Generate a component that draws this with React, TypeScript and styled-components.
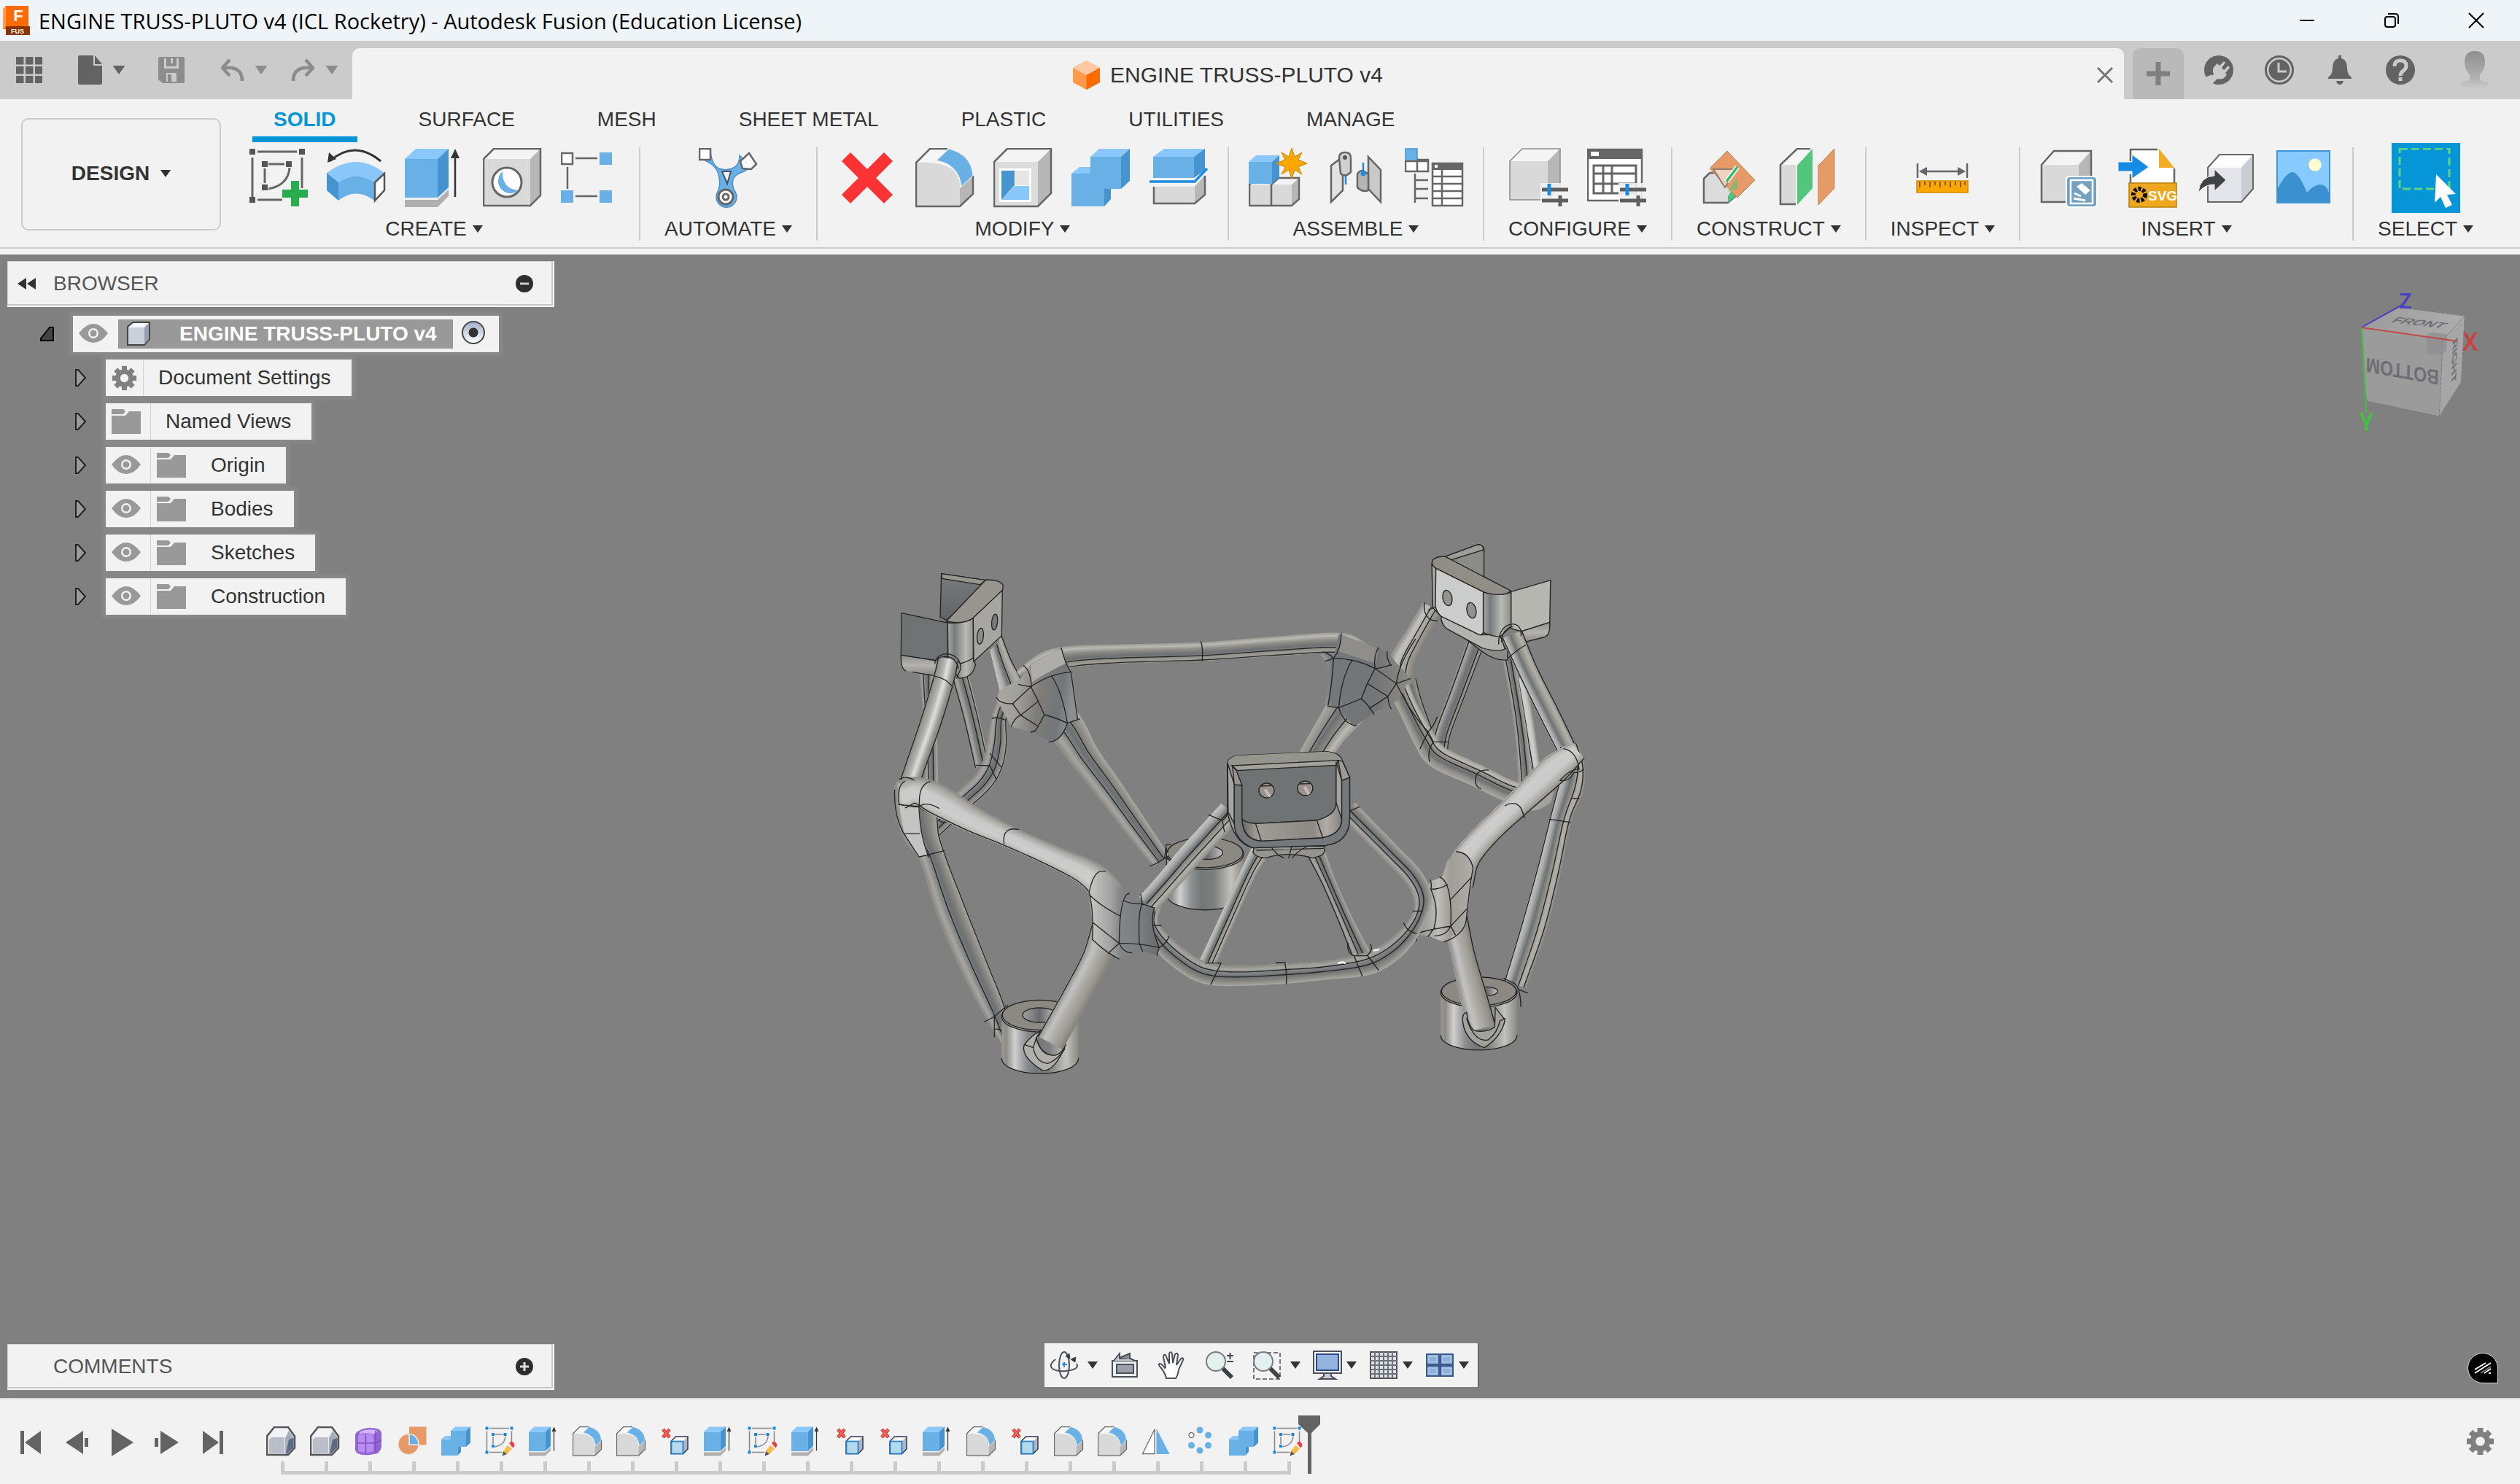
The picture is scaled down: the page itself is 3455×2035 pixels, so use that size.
import React from "react";
import styled, { createGlobalStyle } from "styled-components";

const ui = `"Liberation Sans", Arial, sans-serif`;

const GlobalStyle = createGlobalStyle`
  * { box-sizing: border-box; }
  body { margin: 0; background: #808080; font-family: ${ui}; color: #333; }
  button { font: inherit; color: inherit; background: none; border: 0; padding: 0; margin: 0; cursor: pointer; }
  svg { display: block; }
`;

/* ------------------------------------------------------------------ */
/* Layout parts                                                        */
/* ------------------------------------------------------------------ */

const Page = styled.div`
  min-height: 100vh;
  display: flex;
  flex-direction: column;
`;

const TitleBar = styled.header`
  height: 56px;
  display: flex;
  align-items: center;
  gap: 12px;
  padding: 0 48px 0 4px;
  background: #eef4f7;
  color: #000;
  font: 29px/40px "Open Sans", "Noto Sans", sans-serif;
`;
const WindowTitle = styled.span`
  padding-top: 2px;
`;
const WindowControls = styled.div`
  margin-left: auto;
  display: flex;
  gap: 92px;
`;

const AppBar = styled.div`
  height: 80px;
  display: flex;
  align-items: flex-end;
  background: #cbcbcb;
`;
const QuickAccess = styled.div`
  width: 483px;
  height: 80px;
  flex: none;
  display: flex;
  align-items: center;
  padding-left: 22px;
`;
const QuickButton = styled.button<{ $w: number }>`
  width: ${(p) => p.$w}px;
  display: flex;
  align-items: center;
  gap: 14px;
`;
const DocumentTab = styled.div`
  flex: 1;
  height: 70px;
  display: flex;
  align-items: center;
  justify-content: center;
  background: #f2f2f2;
  border-radius: 10px 10px 0 0;
  font-size: 30px;
  padding: 4px 14px 0 10px;
`;
const DocumentName = styled.div`
  flex: 1;
  display: flex;
  align-items: center;
  justify-content: center;
  gap: 14px;
`;
const AppActions = styled.div`
  width: 543px;
  height: 80px;
  flex: none;
  display: flex;
  align-items: center;
  padding: 0 42px 0 12px;
`;
const NewTab = styled.button`
  align-self: flex-end;
  width: 70px;
  height: 70px;
  display: grid;
  place-items: center;
  background: #b9b9b9;
  border-radius: 10px 10px 0 0;
  margin-right: 28px;
`;
const AppAction = styled.button`
  width: 83px;
  &:last-child { width: 40px; margin-left: auto; }
`;

const Ribbon = styled.section`
  height: 213px;
  display: flex;
  background: #f2f2f2;
  box-shadow: inset 0 -8px #f4f4f4, inset 0 -10px #cccccc;
`;
const WorkspaceButton = styled.button`
  width: 274px;
  height: 154px;
  margin: 26px 11px 0 29px;
  flex: none;
  border: 2px solid #cccccc;
  border-radius: 10px;
  display: flex;
  align-items: center;
  justify-content: center;
  gap: 15px;
  font-size: 28px;
  font-weight: 700;
  padding-bottom: 2px;
`;
const RibbonBody = styled.div`
  flex: 1;
`;
const RibbonTabs = styled.nav`
  height: 59px;
  display: flex;
  gap: 55px;
  padding-left: 32px;
`;
const RibbonTab = styled.button<{ $active?: boolean }>`
  padding: 4px 29px 0;
  height: 59px;
  font-size: 28px;
  line-height: 40px;
  border-bottom: 8px solid ${(p) => (p.$active ? "#0696d7" : "transparent")};
  color: ${(p) => (p.$active ? "#0696d7" : "#333")};
  font-weight: ${(p) => (p.$active ? 700 : 400)};
`;
const ToolGroups = styled.div`
  margin-top: 7px;
  display: flex;
`;
const ToolGroup = styled.div`
  height: 128px;
  padding: 1px 0 0;
  display: flex;
  flex-direction: column;
  align-items: center;
  border-right: 2px solid #cccccc;
  &:last-child { border-right: 0; }
`;
const ToolRow = styled.div`
  display: flex;
  gap: 27px;
  padding: 0 27px;
`;
const ToolButton = styled.button<{ $active?: boolean }>`
  width: 80px;
  height: 82px;
  ${(p) => p.$active && `background: #0696d7; box-shadow: 0 0 0 7px #0696d7;`}
`;
const GroupLabel = styled.button`
  display: flex;
  align-items: center;
  gap: 8px;
  margin-top: 11px;
  padding: 0 33px;
  font-size: 28px;
  line-height: 36px;
`;

const Canvas = styled.main`
  position: relative;
  flex: 1;
  display: flex;
  flex-direction: column;
  justify-content: space-between;
  background: #808080;
`;
const Model = styled.svg`
  position: absolute;
  left: calc(50% - 528px);
  top: 381px;
`;
const TopRow = styled.div`
  display: flex;
  justify-content: space-between;
  align-items: flex-start;
  padding: 9px 0 0 10px;
`;
const ViewCubeSvg = styled.svg`
  margin-top: 12px;
`;
const BrowserPane = styled.section`
  width: 750px;
  position: relative;
  z-index: 1;
`;
const PaneHeader = styled.div`
  width: 750px;
  height: 63px;
  display: flex;
  align-items: center;
  padding: 0 26px 0 13px;
  background: #f2f2f2;
  border: solid #fafafa;
  border-width: 0 2px 2px 0;
  box-shadow: inset -2px -2px #c8c8c8, inset 1px 1px #d4d4d4;
  color: #555;
  font-size: 28px;
`;
const PaneTitle = styled.span<{ $indent?: boolean }>`
  margin-left: ${(p) => (p.$indent ? 50 : 24)}px;
`;
const PaneIcon = styled.button<{ $end?: boolean }>`
  width: 26px;
  height: 26px;
  margin-left: ${(p) => (p.$end ? "auto" : "0")};
`;
const Tree = styled.ul`
  list-style: none;
  margin: 12px 0 0;
  padding: 0;
  display: flex;
  flex-direction: column;
  gap: 10px;
`;
const TreeRow = styled.li<{ $root?: boolean }>`
  height: 50px;
  display: flex;
  align-items: center;
  padding-left: ${(p) => (p.$root ? 43 : 92)}px;
`;
const Twisty = styled.button<{ $root?: boolean }>`
  width: ${(p) => (p.$root ? 47 : 43)}px;
  flex: none;
`;
const TreeItem = styled.div`
  height: 50px;
  display: flex;
  align-items: stretch;
  background: #f2f2f2;
  box-shadow: 0 0 4px 5px rgba(150, 150, 150, 0.4);
`;
const Cell = styled.span<{ $w: number; $line?: boolean }>`
  width: ${(p) => p.$w}px;
  display: flex;
  align-items: center;
  padding-left: 8px;
  border-right: ${(p) => (p.$line ? "1px solid #d4d4d4" : "0")};
`;
const VisibilityButton = styled(Cell).attrs({ as: "button", "aria-label": "Visibility" })`
  padding: 0 0 0 8px;
  border-right: ${(p) => (p.$line ? "1px solid #d4d4d4" : "0")};
`;
const RadioCell = styled.label`
  width: 63px;
  display: flex;
  align-items: center;
  padding-left: 12px;
`;
const ItemName = styled.span<{ $pad: number }>`
  padding: 0 28px 0 ${(p) => p.$pad}px;
  font-size: 28px;
  line-height: 50px;
`;
const RootBar = styled.button`
  height: 40px;
  margin: 5px 0;
  display: flex;
  align-items: center;
  gap: 39px;
  padding: 0 22px 0 11px;
  background: #999999;
  color: #fff;
  font-size: 28px;
  font-weight: 700;
`;
const RadioInput = styled.input`
  appearance: none;
  width: 32px;
  height: 32px;
  margin: 0 0 4px;
  border: 2px solid #444;
  border-radius: 50%;
  background: radial-gradient(circle, #333 0 6px, transparent 7px), linear-gradient(#9fb0cc, #ffffff);
`;

const BottomRow = styled.div`
  display: grid;
  grid-template-columns: 1fr auto 1fr;
  align-items: end;
  padding: 0 30px 11px 10px;
  position: relative;
  z-index: 1;
`;
const NavBar = styled.nav`
  height: 60px;
  margin-bottom: 4px;
  margin-left: 24px;
  display: flex;
  align-items: center;
  padding-left: 7px;
  background: #f2f2f2;
  border-right: 1px solid #444;
`;
const NavButton = styled.button<{ $caret?: boolean; $tight?: boolean }>`
  display: flex;
  align-items: center;
  gap: ${(p) => (p.$tight ? 6 : 12)}px;
  margin-right: ${(p) => (p.$caret ? 17 : 25)}px;
  &:last-child { margin-right: 12px; }
`;
const HelpBadge = styled.button`
  justify-self: end;
  width: 42px;
  height: 42px;
  margin-bottom: 9px;
  background: #000;
  border: 1px solid #ddd;
  border-radius: 21px 21px 0 21px;
  display: grid;
  place-items: center;
`;

const TimelineBar = styled.footer`
  height: 118px;
  display: flex;
  align-items: flex-start;
  background: #f2f2f2;
  border-top: 2px solid #dadada;
  padding-right: 35px;
`;
const Playback = styled.div`
  display: flex;
  width: 355px;
  flex: none;
  padding: 39px 0 0 20px;
  gap: 19px;
`;
const PlayButton = styled.button`
  width: 43px;
  height: 40px;
  display: grid;
  place-items: center;
`;
const Track = styled.ol`
  list-style: none;
  margin: 0;
  padding: 36px 0 0;
  display: flex;
`;
const Feature = styled.li`
  width: 60px;
  display: flex;
  flex-direction: column;
  align-items: center;
`;
const FeatureButton = styled.button`
  width: 41px;
  height: 42px;
`;
const Tick = styled.span<{ $edge?: "first" | "last" }>`
  align-self: stretch;
  height: 18px;
  margin-top: 7px;
  background:
    linear-gradient(#cbcbcb, #cbcbcb) 30px 0 / 5px 18px no-repeat,
    linear-gradient(#cbcbcb, #cbcbcb) ${(p) => (p.$edge === "first" ? "30px" : "0")} 13px /
      ${(p) => (p.$edge === "last" ? "33px" : "60px")} 5px no-repeat;
`;
const Marker = styled.svg`
  margin: 22px 0 0 -15px;
`;
const SettingsButton = styled.button`
  margin: 38px 0 0 auto;
`;

/* ------------------------------------------------------------------ */
/* Small glyphs                                                        */
/* ------------------------------------------------------------------ */

const Caret = ({ c = "#333", w = 14, h = 10 }: { c?: string; w?: number; h?: number }) => (
  <svg width={w} height={h} viewBox="0 0 14 10">
    <path d="M0 0h14l-7 10z" fill={c} />
  </svg>
);

const Gear = ({ size, c, hole }: { size: number; c: string; hole: string }) => (
  <svg width={size} height={size} viewBox="-20 -20 40 40">
    {[0, 45, 90, 135].map((a) => (
      <rect key={a} x="-4" y="-19" width="8" height="38" fill={c} transform={`rotate(${a})`} />
    ))}
    <circle r="14" fill={c} />
    <circle r="6.5" fill={hole} />
  </svg>
);

const Eye = () => (
  <svg width="40" height="28" viewBox="0 0 40 28">
    <path d="M0 13Q10 0 20 0t20 13Q31 26 20 26T0 13z" fill="#999" />
    <circle cx="20" cy="13" r="7" fill="#f2f2f2" />
    <circle cx="20" cy="13" r="4.5" fill="#999" />
  </svg>
);

const Folder = () => (
  <svg width="40" height="34" viewBox="0 0 40 34">
    <path d="M0 0h16l3 3-3 4H0z" fill="#999" />
    <path d="M0 9h19l5-6h16v31H0z" fill="#999" />
  </svg>
);

const Twist = ({ open }: { open?: boolean }) =>
  open ? (
    <svg width="22" height="22" viewBox="0 0 22 22">
      <path d="M20 2v18H3v-3L15 2z" fill="#444" stroke="#000" strokeWidth="2" />
    </svg>
  ) : (
    <svg width="18" height="26" viewBox="0 0 18 26">
      <path d="M2 2h3l10 11L5 24H2z" fill="#9a9a9a" stroke="#222" strokeWidth="2" />
    </svg>
  );

const GridGlyph = () => (
  <svg width="36" height="36" viewBox="0 0 36 36" fill="#636363">
    {[0, 13, 26].map((y) => [0, 13, 26].map((x) => <rect key={`${x}${y}`} x={x} y={y} width="10.5" height="10.5" rx="1" />))}
  </svg>
);
const FileGlyph = () => (
  <svg width="33" height="40" viewBox="0 0 33 40" fill="#636363">
    <path d="M2 0h19v14h12v24q0 2-2 2H2q-2 0-2-2V2q0-2 2-2z" />
    <path d="M23 0v12h10z" />
  </svg>
);
const SaveGlyph = () => (
  <svg width="36" height="36" viewBox="0 0 36 36">
    <path d="M2 0h32q2 0 2 2v32q0 2-2 2H6l-6-5V2q0-2 2-2z" fill="#8c8c8c" />
    <path d="M8 2v14h20V2M11 34V22h14v12" fill="#cbcbcb" />
    <path d="M11 2h14v11H11zM13 24h5v10h-5z" fill="#8c8c8c" />
    <path d="M17 2h3v7h-3z" fill="#cbcbcb" />
  </svg>
);
const UndoGlyph = ({ flip }: { flip?: boolean }) => (
  <svg width="33" height="32" viewBox="0 0 33 32">
    <g transform={flip ? "translate(33 0) scale(-1 1)" : undefined} fill="none" stroke="#8c8c8c" strokeWidth="4.5">
      <path d="M13 2L3 13l10 11" strokeLinejoin="round" />
      <path d="M3 13h12q15 2 15 18" />
    </g>
  </svg>
);

const PlugGlyph = () => (
  <svg width="40" height="40" viewBox="0 0 40 40">
    <circle cx="20" cy="20" r="20" fill="#636363" />
    <path d="M6 34l7-8q-3-8 2-12l3-3 3 3 6-6 2 2-5 7 3 3 6-6 2 3-6 7 2 2q-3 8-13 6l-8 8z" fill="#cbcbcb" />
    <path d="M0 30l12-4-5 9z" fill="#cbcbcb" />
  </svg>
);
const ClockGlyph = () => (
  <svg width="40" height="40" viewBox="0 0 40 40">
    <circle cx="20" cy="20" r="18.5" fill="none" stroke="#636363" strokeWidth="3" />
    <circle cx="20" cy="20" r="14.5" fill="#636363" />
    <path d="M19 10v12h11" fill="none" stroke="#cbcbcb" strokeWidth="3" />
  </svg>
);
const BellGlyph = () => (
  <svg width="40" height="40" viewBox="0 0 40 40" fill="#636363">
    <path d="M18 0h4v4q8 2 8 13 0 9 6 13v2H4v-2q6-4 6-13Q10 6 18 4zM15 35h10q-1 5-5 5t-5-5z" />
  </svg>
);
const HelpGlyph = () => (
  <svg width="40" height="40" viewBox="0 0 40 40">
    <circle cx="20" cy="20" r="20" fill="#636363" />
    <path d="M12 15q0-8 8-8t8 7q0 4-4 7t-4 7" fill="none" stroke="#cbcbcb" strokeWidth="5" />
    <rect x="17.5" y="30" width="5" height="5" fill="#cbcbcb" />
  </svg>
);
const AvatarGlyph = () => (
  <svg width="40" height="52" viewBox="0 0 40 52">
    <defs>
      <linearGradient id="av" x1="0" y1="0" x2="0" y2="1">
        <stop offset="0" stopColor="#8f8f8f" />
        <stop offset=".7" stopColor="#b0b0b0" />
        <stop offset="1" stopColor="#cbcbcb" />
      </linearGradient>
    </defs>
    <path d="M20 0q14 0 14 15 0 11-7 17v7q3 3 11 4 3 8-18 9Q-1 51 1 43q9-1 12-4v-7Q6 26 6 15 6 0 20 0z" fill="url(#av)" />
  </svg>
);

/* ------------------------------------------------------------------ */
/* Ribbon icons, all on an 80 unit grid                                */
/* ------------------------------------------------------------------ */

const K = "#666";
const B1 = "#8ac8fb";
const B2 = "#68b0e6";
const B3 = "#4694cf";

const Box = ({ x = 0, y = 0, w = 65, h = 65, dx = 15, dy = 14, f = ["#d9d9d9", "#f4f4f4", "#b7b7b7"], s = K, sw = 2.5 }: any) => (
  <g>
    <path d={`M${x} ${y + dy}h${w}v${h}h${-w}z`} fill={f[0]} />
    <path d={`M${x} ${y + dy}l${dx} ${-dy}h${w}l${-dx} ${dy}z`} fill={f[1]} />
    <path d={`M${x + w} ${y + dy}l${dx} ${-dy}v${h}l${-dx} ${dy}z`} fill={f[2]} />
    <path d={`M${x} ${y + dy}l${dx} ${-dy}h${w}v${h}l${-dx} ${dy}h${-w}z`} fill="none" stroke={s} strokeWidth={sw} />
  </g>
);
const blue = [B2, B1, B3];

const sketchLines = (node: string, line: string) => (
  <>
    <path d="M12 5h54M5 13v54M73 13v42M12 71h34M27 22h22M22 28v20" stroke={line} strokeWidth="3" fill="none" />
    <path d="M56 27q-2 24-29 29" stroke={line} strokeWidth="3" fill="none" />
    {[[1, 1], [69, 1], [1, 67], [18, 18], [51, 18], [18, 50]].map(([x, y]) => (
      <rect key={`${x}-${y}`} x={x} y={y} width="8" height="8" fill={node} />
    ))}
  </>
);

const Sliders = () => (
  <>
    <path d="M43 48h40v34H43z" fill="#f2f2f2" opacity=".9" />
    <path d="M45 57h36M45 72h36" stroke="#5f5f5f" strokeWidth="5" />
    <path d="M55 49v16" stroke="#1b8ce3" strokeWidth="5" />
    <path d="M70 65v15" stroke="#5f5f5f" strokeWidth="5" />
  </>
);

const icons: Record<string, React.ReactNode> = {
  sketch: (
    <>
      {sketchLines("#555", K)}
      <path d="M58 45h11v12h12v11H69v12H58V68H46V57h12z" fill="#27ad4e" />
    </>
  ),
  sketchEdit: (
    <>
      {sketchLines("#1a86dd", "#888")}
      <path d="M62 52l12 9-14 15-10-8z" fill="#f7bb47" />
      <path d="M50 68l10 8-13 5z" fill="#555" />
      <path d="M66 46q6-8 12-1 6 6-1 14z" fill="#f23b45" />
    </>
  ),
  revolve: (
    <>
      <path d="M4 18Q38-12 74 18" fill="none" stroke="#333" strokeWidth="3" />
      <path d="M1 20L3 6l10 9z" fill="#333" />
      <path d="M0 34Q40 4 79 34L65 47Q40 30 16 47z" fill={B1} />
      <path d="M16 47Q40 30 65 47v25Q40 53 16 72z" fill={B2} />
      <path d="M0 34l16 13v25L0 58z" fill={B3} />
      <path d="M79 35L66 47v25l13-14z" fill="#fff" stroke="#555" strokeWidth="2.5" />
    </>
  ),
  extrude: (
    <>
      <path d="M0 71h45l15-14v9L45 81H0z" fill="#b0b0b0" />
      <Box x={0} y={1} w={45} h={53} f={blue} s="none" />
      <path d="M69 10v57" stroke="#333" strokeWidth="2.5" />
      <path d="M69 1l6 13H63z" fill="#333" />
    </>
  ),
  hole: (
    <>
      <Box x={1} y={1} w={64} h={64} dx={14} />
      <circle cx="33" cy="47" r="20" fill="#fff" stroke={K} strokeWidth="3" />
      <path d="M27 32q-1 24 22 26A17 17 0 1 1 27 32z" fill={B2} />
    </>
  ),
  pattern: (
    <>
      <path d="M20 14h30M9 26v30M20 66h30" stroke={K} strokeWidth="2.5" />
      <rect x="1" y="7" width="15" height="15" fill="#fff" stroke={K} strokeWidth="2.5" />
      <path d="M53 6h17v17H53zM0 58h17v17H0zM53 58h17v17H53z" fill={B2} />
    </>
  ),
  automate: (
    <>
      <path
        d="M16 4q2 20 12 24 10 4 20-1 8-4 8-17l14 14q-2 6-10 9-10 3-13 10-2 10 3 17a14 14 0 1 1-24 0q4-9 2-20-2-12-12-19-8-4-13-8z"
        fill={B2}
        stroke="#4c8fc9"
        strokeWidth="1.5"
      />
      <path d="M32 32h12l-5 17z" fill="#f2f2f2" stroke="#456" strokeWidth="2" />
      <rect x="1" y="1" width="15" height="15" fill="#fff" stroke={K} strokeWidth="2.5" />
      <path d="M69 7l10 15-7 7-12-1-3-10z" fill="#fff" stroke={K} strokeWidth="2.5" />
      <circle cx="37" cy="67" r="10" fill="#fff" stroke={K} strokeWidth="3" />
      <circle cx="37" cy="67" r="4" fill="#fff" stroke={K} strokeWidth="3" />
    </>
  ),
  remove: <path d="M12 12L70 70M70 12L12 70" stroke="#fb3334" strokeWidth="17" />,
  fillet: (
    <>
      <path d="M1 20L20 1h24L28 18q32 6 34 35v27H1z" fill="#f6f6f6" />
      <path d="M1 20q60-4 60 33v27H1z" fill="#d9d9d9" />
      <path d="M61 55l18-16v24L61 80z" fill="#b7b7b7" />
      <path d="M44 1L20 1 1 20v60h60l18-17V38" fill="none" stroke={K} strokeWidth="2.5" />
      <path d="M46 1q31 8 33 37L63 53Q60 23 29 17z" fill={B2} stroke="#f2f2f2" strokeWidth="1" />
    </>
  ),
  shell: (
    <>
      <Box x={1} y={1} w={60} h={61} dx={18} dy={18} f={["#dcdcdc", "#f4f4f4", "#b7b7b7"]} />
      <path d="M8 28h44v46H8z" fill="#fff" />
      <path d="M11 31v40l18-20V31z" fill={B3} />
      <path d="M11 71l18-19h20v19z" fill={B1} />
      <path d="M30 31h19v20H30z" fill="#e6e6e6" />
    </>
  ),
  combine: (
    <>
      <path d="M0 35h26V12h42v44H45v24H0z" fill={B2} />
      <path d="M0 35l11-9h15v9zM26 12L38 1h42L68 12z" fill={B1} />
      <path d="M68 12L80 1v44L68 56zM45 56h9v14l-9 10z" fill={B3} />
    </>
  ),
  split: (
    <>
      <Box x={5} y={1} w={56} h={29} dx={15} dy={11} f={blue} s="none" />
      <path d="M5 53h57l15-16v28L62 77H5z" fill="#d9d9d9" />
      <path d="M62 53l14-16v28L62 77z" fill="#b7b7b7" />
      <path d="M6 53v23h56l14-12V38" fill="none" stroke={K} strokeWidth="2.5" />
      <path d="M0 46h62l17-18" fill="none" stroke="#1b8ce3" strokeWidth="3.5" />
    </>
  ),
  component: (
    <>
      <Box x={1} y={41} w={30} h={29} dx={10} dy={9} />
      <Box x={31} y={41} w={28} h={29} dx={10} dy={9} />
      <Box x={0} y={10} w={32} h={30} dx={10} dy={9} f={blue} s="none" />
      <path d="M59 0l4 12 10-6-5 10 12 5-12 5 5 10-10-6-4 12-4-12-10 6 5-10-12-5 12-5-5-10 10 6z" fill="#fba700" stroke="#c98600" strokeWidth="1" />
    </>
  ),
  joint: (
    <>
      <g stroke={K} strokeWidth="2.5">
        <path d="M6 24l16-12v46L6 74z" fill="#e2e2e2" />
        <path d="M17 13q0-7 8-7t8 7v20q-8 8-14 2z" fill="#d0d0d0" />
        <path d="M57 12l17 18v44L57 56z" fill="#c9c9c9" />
        <path d="M42 36q2-5 8-5l7 5v22q-8 3-15-4z" fill="#b5b5b5" />
      </g>
      <circle cx="25" cy="13" r="3" fill="#555" />
      <path d="M26 38v12M50 20v15" stroke="#1b8ce3" strokeWidth="2.5" />
      <circle cx="50" cy="35" r="3.5" fill="#1b8ce3" />
    </>
  ),
  bom: (
    <>
      <rect width="17" height="17" y="1" fill={B2} stroke={B3} strokeWidth="1.5" />
      <path d="M1 18h31v14H1zM17 16v16M17 16h15v8" fill="#fff" stroke={K} strokeWidth="2.5" />
      <path d="M14 35v40M14 44h18M14 56h18M14 69h18" stroke={K} strokeWidth="2.5" fill="none" />
      <rect x="38" y="21" width="41" height="58" fill="#fff" stroke={K} strokeWidth="2.5" />
      <path d="M37 20h43v10H37z" fill={K} />
      <path d="M38 39h41M38 49h41M38 59h41M38 69h41M51 30v49" stroke={K} strokeWidth="2.5" />
      <path d="M41 23h4v4h-4z" fill="#fff" />
    </>
  ),
  config: (
    <>
      <Box x={1} y={1} w={52} h={53} dx={17} dy={17} s="#8a8a8a" sw={1.5} />
      <Sliders />
    </>
  ),
  configTable: (
    <>
      <rect x="1" y="2" width="74" height="70" fill="#fff" stroke={K} strokeWidth="2.5" />
      <path d="M0 1h76v14H0z" fill={K} />
      <path d="M5 5h11v6H5z" fill="#fff" />
      <path d="M9 24h58v38H9zM9 35h58M9 49h58M22 24v38M34 24v38" fill="none" stroke={K} strokeWidth="3" />
      <Sliders />
    </>
  ),
  offsetPlane: (
    <>
      <path d="M5 42l8-8h40v28L38 75H5z" fill="#dcdcdc" stroke={K} strokeWidth="2.5" />
      <path d="M38 66l18-26v20L38 75z" fill="#4ec47d" />
      <path d="M37 4l38 40-24 24L13 28z" fill="#e59a67" stroke="#c98152" strokeWidth="1" />
      <path d="M18 29h32L34 54z" fill="#eed2be" stroke="#8b7b70" strokeWidth="2" />
      <path d="M36 46l15-20" stroke="#fff" strokeWidth="7" />
      <path d="M51 40v16L38 60z" fill="#8cb574" />
      <path d="M36 46l15-20" stroke="#2fb963" strokeWidth="3.5" />
    </>
  ),
  midPlane: (
    <>
      <path d="M3 23L26 1h18L24 24v53H3z" fill="#f6f6f6" />
      <path d="M3 23h21v54H3z" fill="#d9d9d9" />
      <path d="M44 1H26L3 23v54h21" fill="none" stroke={K} strokeWidth="2.5" />
      <path d="M26 24L47 1v54L26 78z" fill="#54c57c" />
      <path d="M55 24L77 1v54L55 78z" fill="#e59a67" stroke="#c98152" strokeWidth="1" />
    </>
  ),
  measure: (
    <>
      <path d="M6 21v20M74 21v20M12 32h56" stroke={K} strokeWidth="2.5" />
      <path d="M8 32l11-6v12zM72 32l-11-6v12z" fill={K} />
      <rect x="5" y="45" width="70" height="16" fill="#fba700" stroke="#d48a00" strokeWidth="1.5" />
      <path d="M9 46v8M16 46v5M23 46v8M30 46v5M37 46v8M44 46v5M51 46v8M58 46v5M65 46v8M71 46v5" stroke="#8a5c00" strokeWidth="2" />
    </>
  ),
  derive: (
    <>
      <Box x={2} y={4} w={51} h={51} dx={17} dy={19} />
      <rect x="35" y="38" width="44" height="44" rx="5" fill="#fff" />
      <rect x="37" y="40" width="40" height="40" rx="4" fill="#73a1c0" />
      <rect x="42" y="44" width="30" height="32" fill="none" stroke="#fff" strokeWidth="2.5" />
      <path d="M50 53l7-5 12 10-7 6z" fill="#fff" />
      <path d="M47 62l9 4M46 69l16 3" stroke="#fff" strokeWidth="3" />
    </>
  ),
  svgIn: (
    <>
      <path d="M17 2h38l22 26v20H17z" fill="#fff" />
      <path d="M17 18V2h37M77 28v20M17 36v12" fill="none" stroke={K} strokeWidth="2.5" />
      <path d="M56 1l21 26H56z" fill="#f0ac22" />
      <path d="M0 19h19V9l23 17-23 16V32H0z" fill="#158be6" stroke="#f2f2f2" strokeWidth="1" />
      <rect x="15" y="48" width="65" height="33" fill="#eda81f" stroke="#b87f10" strokeWidth="1.5" />
      <circle cx="29" cy="64" r="8" fill="none" stroke="#111" strokeWidth="6" strokeDasharray="4 2" />
      <text x="41" y="72" fontFamily="Liberation Sans, sans-serif" fontWeight="700" fontSize="19" fill="#fff">SVG</text>
    </>
  ),
  insertMesh: (
    <>
      <Box x={16} y={9} w={46} h={47} dx={16} dy={18} f={["#e3e5ea", "#fdfdfd", "#c9ccd2"]} sw={2} />
      <path d="M3 61q2-22 22-23v-9l16 15-16 15v-9Q11 50 3 61z" fill="#3f4246" stroke="#f2f2f2" strokeWidth="1" />
    </>
  ),
  canvasPic: (
    <>
      <rect x="4" y="4" width="72" height="71" fill="#87caff" stroke="#3f93d6" strokeWidth="2" />
      <circle cx="56" cy="23" r="9" fill="#fdfdd0" stroke="#a9d5ee" strokeWidth="1" />
      <path d="M5 55q12-22 20-22t20 28q10-11 18-11t12 11v13H5z" fill="#3b91cf" />
    </>
  ),
  select: (
    <>
      <path d="M4 1h68v55H4z" fill="none" stroke="#5fd384" strokeWidth="3" strokeDasharray="11 5" />
      <path d="M54 36l27 27-12 1 7 14-9 4-7-15-8 8z" fill="#fff" />
    </>
  ),
  solidBody: (
    <>
      <path d="M2 27L22 2h38l18 25v32L60 78H2z" fill="#e8eaee" stroke="#555" strokeWidth="5" />
      <path d="M8 38q3-8 10-8h32v44H8z" fill="#b9bec9" />
      <path d="M52 32L62 12l13 18v26L58 75h-6z" fill="#a6adbd" />
      <path d="M62 36l13-4v26L58 75h-4z" fill="#5c6a82" />
      <path d="M10 27L25 6h32l4 5-9 19z" fill="#f2f3f5" />
    </>
  ),
  form: (
    <>
      <path d="M14 12q20-12 48-6 16 2 14 20v30q-4 20-22 20-26 6-44-2-8-6-6-20V26q0-10 10-14z" fill="#9466d3" />
      <path d="M12 24q22-8 42 0v44q-22 8-42 0z" fill="#b98cf0" />
      <path d="M18 14q22-10 48-2L54 22q-20-6-40-1z" fill="#d3b4fa" />
      <path d="M33 22v50M10 46h46q14-4 20-10M60 12v58" fill="none" stroke="#7e4fc2" strokeWidth="3" />
    </>
  ),
  plane: (
    <>
      <path d="M32 1h47v50H32z" fill="#e59a67" />
      <circle cx="30" cy="49" r="28" fill="#e59a67" stroke="#f2f2f2" strokeWidth="1.5" />
      <path d="M32 21q24 2 26 29H32z" fill={B2} stroke="#fff" strokeWidth="2.5" />
    </>
  ),
  removeBody: (
    <>
      <path d="M8 8l18 22M26 8L8 30" stroke="#c9302c" strokeWidth="9" />
      <path d="M8 8l18 22M26 8L8 30" stroke="#f2665f" strokeWidth="5" />
      <Box x={30} y={28} w={33} h={34} dx={13} dy={13} f={["#a8d4ea", "#fdfdfd", "#aeb6c4"]} s="#2b3850" sw={3} />
      <rect x="31" y="41" width="32" height="34" fill="#b3daec" stroke="#2a7fc8" strokeWidth="3.5" />
    </>
  ),
  mirror: (
    <>
      <path d="M36 8v67H3z" fill="#fff" stroke={K} strokeWidth="2.5" />
      <path d="M41 6v70h36z" fill={B2} />
    </>
  ),
  circular: (
    <>
      <circle cx="17" cy="24" r="7" fill="#fff" stroke={K} strokeWidth="2.5" />
      {[[40, 10], [63, 24], [63, 52], [40, 66], [17, 52]].map(([x, y]) => (
        <circle key={`${x}${y}`} cx={x} cy={y} r="9" fill={B2} />
      ))}
    </>
  ),
};

const Icon = ({ name, size = 82 }: { name: string; size?: number }) => (
  <svg width={size} height={size} viewBox="0 0 82 82">
    {icons[name]}
  </svg>
);

/* ------------------------------------------------------------------ */
/* Navigation bar icons on a 40 unit grid                              */
/* ------------------------------------------------------------------ */

const N = "#4b4f58";
const nav: { name: string; caret?: boolean; tight?: boolean; art: React.ReactNode }[] = [
  {
    name: "Orbit",
    caret: true,
    art: (
      <g fill="none" stroke={N} strokeWidth="2">
        <ellipse cx="20" cy="20" rx="7" ry="18" />
        <path d="M8 12q-10 8-4 13 6 4 18 3 20-2 15-10" />
        <path d="M22 8l6 3-1-7zM29 12l6 4 1-7z" fill="#333" strokeWidth="1" />
        <path d="M20 16v7M17 19h7" stroke="#1b8ce3" />
      </g>
    ),
  },
  {
    name: "Look at",
    art: (
      <g stroke={N} strokeWidth="2">
        <path d="M3 14h34v22H3z" fill="#eceef1" />
        <path d="M5 14l8-10v7h15l6 3" fill="#c9ccd1" />
        <path d="M13 10l14-6v8" fill="#8b9097" />
        <rect x="9" y="19" width="23" height="12" fill="#9ba1ab" />
      </g>
    ),
  },
  {
    name: "Pan",
    art: (
      <path
        d="M12 38q-2-8-7-14-5-5-2-6 3 0 7 6l1-1L8 9q0-4 3-3l5 12 0-14q2-4 4 0l1 13 3-12q3-3 4 1l-2 14 6-9q4-2 3 2l-6 13q-1 8-4 12z"
        fill="#fff"
        stroke={N}
        strokeWidth="2"
      />
    ),
  },
  {
    name: "Zoom",
    art: (
      <g>
        <path d="M24 24l13 13" stroke="#3b3f47" strokeWidth="6" />
        <circle cx="15" cy="15" r="13" fill="#e2f1ee" stroke="#777c85" strokeWidth="2" />
        <path d="M30 7h9M34.500 3v9M30 15h9" stroke="#444" strokeWidth="2" />
      </g>
    ),
  },
  {
    name: "Zoom window",
    caret: true,
    art: (
      <g>
        <rect x="2" y="3" width="36" height="36" fill="none" stroke="#777" strokeWidth="2" strokeDasharray="6 3" />
        <path d="M24 24l13 13" stroke="#444" strokeWidth="6" />
        <circle cx="15" cy="15" r="13" fill="#e2f1ee" stroke="#777c85" strokeWidth="2" />
      </g>
    ),
  },
  {
    name: "Display settings",
    caret: true,
    tight: true,
    art: (
      <g>
        <path d="M15 31h10v4l6 4H9l6-4z" fill="#c8ccd4" stroke={N} strokeWidth="2" />
        <rect x="1" y="1" width="38" height="30" fill="#f4f5f7" stroke={N} strokeWidth="2" />
        <rect x="5" y="5" width="30" height="22" fill="#93b4df" stroke="#2f4a80" strokeWidth="2" />
      </g>
    ),
  },
  {
    name: "Grid and snaps",
    caret: true,
    tight: true,
    art: (
      <g>
        <rect x="2" y="2" width="36" height="36" fill="#dfe1e6" stroke="#555" strokeWidth="2" />
        <path d="M8 2v36M14 2v36M20 2v36M26 2v36M32 2v36M2 8h36M2 14h36M2 20h36M2 26h36M2 32h36" stroke="#6d717a" strokeWidth="2" />
      </g>
    ),
  },
  {
    name: "Viewports",
    caret: true,
    tight: true,
    art: (
      <g fill="#8fb0da" stroke="#3a5a8c" strokeWidth="2">
        <path d="M2 5h17v14H2zM21 5h17v14H21zM2 21h17v14H2zM21 21h17v14H21z" />
        <path d="M5 8h11v8H5zM24 8h11v8H24zM5 24h11v8H5zM24 24h11v8H24z" stroke="#b9d0ec" strokeWidth="1" fill="none" />
      </g>
    ),
  },
];

/* ------------------------------------------------------------------ */
/* Truss model                                                         */
/* ------------------------------------------------------------------ */

type P = [number, number, number];
type Stop = [number, string];

const hex = (c: string) => [1, 3, 5].map((i) => parseInt(c.slice(i, i + 2), 16));
const shadeAt = (stops: Stop[], t: number) => {
  let i = 0;
  while (i < stops.length - 2 && t > stops[i + 1][0]) i++;
  const [a, ca] = stops[i];
  const [b, cb] = stops[i + 1];
  const k = Math.min(1, Math.max(0, (t - a) / (b - a)));
  const x = hex(ca);
  const y = hex(cb);
  return `rgb(${x.map((v, j) => Math.round(v + (y[j] - v) * k)).join(",")})`;
};

/* Catmull-Rom sampling of the centre line, with the width carried along. */
const sample = (pts: P[]) => {
  const out: P[] = [];
  const at = (i: number) => pts[Math.max(0, Math.min(pts.length - 1, i))];
  for (let i = 0; i < pts.length - 1; i++) {
    for (let s = 0; s < 10; s++) {
      const t = s / 10;
      const [a, b, c, d] = [at(i - 1), at(i), at(i + 1), at(i + 2)];
      out.push(
        [0, 1, 2].map(
          (k) =>
            0.5 * (2 * b[k] + (c[k] - a[k]) * t + (2 * a[k] - 5 * b[k] + 4 * c[k] - d[k]) * t * t + (3 * b[k] - a[k] - 3 * c[k] + d[k]) * t * t * t)
        ) as P
      );
    }
  }
  out.push(pts[pts.length - 1]);
  return out;
};

const SH: Record<string, Stop[]> = {
  ring: [[0, "#9b9992"], [0.15, "#bab9b4"], [0.35, "#8f8d87"], [0.6, "#6c7071"], [0.75, "#8d8c88"], [1, "#aba9a3"]],
  bright: [[0, "#8b8983"], [0.15, "#a9a8a3"], [0.4, "#c8c9c8"], [0.75, "#cccdcc"], [0.92, "#b9b8b3"], [1, "#8c8a85"]],
  dark: [[0, "#aaa9a4"], [0.2, "#8b8a84"], [0.45, "#6b6f70"], [0.65, "#858787"], [0.82, "#a8a7a2"], [1, "#8a8883"]],
  chrome: [[0, "#7c7b77"], [0.2, "#9c9b97"], [0.45, "#e0e1e0"], [0.62, "#b4b4b1"], [0.85, "#9a9994"], [1, "#82807b"]],
  steel: [[0, "#8a8882"], [0.2, "#b3b2ad"], [0.4, "#97968f"], [0.6, "#6e7273"], [0.8, "#a9abaa"], [1, "#c6c6c3"]],
  soft: [[0, "#83817b"], [0.25, "#9d9b94"], [0.5, "#adaca7"], [0.75, "#c3c4c2"], [1, "#8f8d88"]],
};

const Strut = ({ pts, sh = "dark", lines = [0.02, 0.5] }: { pts: P[]; sh?: string; lines?: number[] }) => {
  const c = sample(pts);
  const rail = (t: number) =>
    c.map((p, i) => {
      const a = c[Math.max(0, i - 1)];
      const b = c[Math.min(c.length - 1, i + 1)];
      const dx = b[0] - a[0];
      const dy = b[1] - a[1];
      const l = Math.hypot(dx, dy) || 1;
      const o = (t - 0.5) * p[2];
      return `${(p[0] - (dy / l) * o).toFixed(1)} ${(p[1] + (dx / l) * o).toFixed(1)}`;
    });
  const far = rail(1).reverse().join("L");
  const n = 16;
  return (
    <g>
      {Array.from({ length: n }, (_, i) => (
        <path key={i} d={`M${rail(i / n).join("L")}L${far}Z`} fill={shadeAt(SH[sh], (i + 0.5) / n)} />
      ))}
      {lines.map((t) => (
        <path key={t} d={`M${rail(t).join("L")}`} className="e" />
      ))}
    </g>
  );
};

const Right = ({ children }: { children: React.ReactNode }) => <g transform="translate(1380 0) scale(1.0523 1)">{children}</g>;
const Low = ({ children }: { children: React.ReactNode }) => <g transform="translate(0 1050)">{children}</g>;

const Foot = ({ x, y, r, h, hx, hr }: { x: number; y: number; r: number; h: number; hx: number; hr: number }) => (
  <g>
    <path d={`M${x - r} ${y}V${y + h}A${r} ${r * 0.4} 0 0 0 ${x + r} ${y + h}V${y}z`} fill="url(#foot)" />
    <path d={`M${x - r} ${y + h}A${r} ${r * 0.4} 0 0 0 ${x + r} ${y + h}`} className="e" />
    <ellipse cx={x} cy={y + 6} rx={r} ry={r * 0.4} fill="#a2a09a" className="o" />
    <ellipse cx={x} cy={y} rx={r - 3} ry={r * 0.39} fill="#8b8982" className="o" />
    <ellipse cx={hx} cy={y} rx={hr} ry={hr * 0.43} fill="url(#holeG)" className="o" />
  </g>
);

const Truss = () => (
  <Model width="1060" height="800" viewBox="0 0 3180 2400" role="img" aria-label="Engine truss model">
    <defs>
      <style>{`.e{fill:none;stroke:#242525;stroke-width:4;stroke-linecap:round}.o{stroke:#242525;stroke-width:4}`}</style>
      <linearGradient id="foot">
        <stop offset="0" stopColor="#9a9893" />
        <stop offset=".06" stopColor="#8e8c87" />
        <stop offset=".17" stopColor="#cfd0d0" />
        <stop offset=".32" stopColor="#8d8f90" />
        <stop offset=".45" stopColor="#737778" />
        <stop offset=".62" stopColor="#7d7f7f" />
        <stop offset=".84" stopColor="#c2c2bd" />
        <stop offset="1" stopColor="#8a8883" />
      </linearGradient>
      <linearGradient id="holeG">
        <stop offset="0" stopColor="#a3a29d" />
        <stop offset=".5" stopColor="#686b6d" />
        <stop offset="1" stopColor="#c4c4c2" />
      </linearGradient>
      <linearGradient id="jl" x1="0" y1="0" x2="1" y2=".2">
        <stop offset="0" stopColor="#aaa9a4" />
        <stop offset=".35" stopColor="#a09f9a" />
        <stop offset=".6" stopColor="#7f7d79" />
        <stop offset=".85" stopColor="#727678" />
        <stop offset="1" stopColor="#8d8f8f" />
      </linearGradient>
      <linearGradient id="jr">
        <stop offset="0" stopColor="#a4a39f" />
        <stop offset=".12" stopColor="#74787a" />
        <stop offset=".6" stopColor="#727475" />
        <stop offset="1" stopColor="#8d8b86" />
      </linearGradient>
      <linearGradient id="jf" x1="0" y1="0" x2="1" y2="0">
        <stop offset="0" stopColor="#c7c8c7" />
        <stop offset=".3" stopColor="#a5a5a2" />
        <stop offset=".45" stopColor="#838689" />
        <stop offset=".7" stopColor="#7b7f81" />
        <stop offset="1" stopColor="#686c6d" />
      </linearGradient>
      <linearGradient id="jg">
        <stop offset="0" stopColor="#8a8984" />
        <stop offset=".4" stopColor="#bdbdb9" />
        <stop offset=".6" stopColor="#9f9d96" />
        <stop offset="1" stopColor="#aeada8" />
      </linearGradient>
      <linearGradient id="cyl">
        <stop offset="0" stopColor="#a9a8a4" />
        <stop offset=".25" stopColor="#777b7e" />
        <stop offset=".65" stopColor="#b9b9b5" />
        <stop offset="1" stopColor="#8d8b85" />
      </linearGradient>
      <linearGradient id="roll" x1="0" y1="0" x2="0" y2="1">
        <stop offset="0" stopColor="#8b8c8b" />
        <stop offset=".5" stopColor="#b4b3ae" />
        <stop offset="1" stopColor="#8d8b85" />
      </linearGradient>
      <linearGradient id="wing" x1="0" y1="0" x2="0" y2="1">
        <stop offset="0" stopColor="#797c7b" />
        <stop offset="1" stopColor="#5f6365" />
      </linearGradient>
      <linearGradient id="shelf">
        <stop offset="0" stopColor="#66645f" />
        <stop offset=".15" stopColor="#a09d97" />
        <stop offset=".7" stopColor="#8c8985" />
        <stop offset=".85" stopColor="#b1aca8" />
        <stop offset="1" stopColor="#85827e" />
      </linearGradient>
    </defs>

    {/* rear frame, left side */}
    <Strut pts={[[212, 580, 60], [214, 700, 40], [228, 850, 52], [232, 1060, 52]]} lines={[0.35, 0.75]} />
    <Strut pts={[[350, 590, 66], [395, 760, 62], [440, 960, 60]]} lines={[0.1, 0.4, 0.98]} />
    <Strut pts={[[540, 680, 60], [510, 765, 62], [502, 870, 82], [482, 960, 86], [440, 1030, 84], [360, 1105, 82], [230, 1230, 76]]} lines={[0.05, 0.35, 0.65]} />
    <path d="M415 958L472 960 497 1015M480 765Q510 758 535 772M472 910L517 965" className="e" />
    <Strut pts={[[488, 420, 60], [522, 530, 76], [556, 620, 100], [580, 700, 110]]} sh="steel" lines={[0.04, 0.5]} />

    {/* rear ring */}
    <Strut pts={[[600, 600, 70], [700, 540, 95], [800, 512, 88], [1000, 500, 78], [1343, 490, 76], [1650, 468, 80], [1906, 455, 84], [1990, 490, 88], [2090, 540, 70]]} sh="ring" lines={[0.72, 0.96]} />
    <path d="M1340 450q10 40 4 78" className="e" />

    {/* rear foot and the diagonals that reach it */}
    <Foot x={1357} y={1318} r={158} h={172} hx={1365} hr={64} />
    <Strut pts={[[690, 690, 170], [790, 810, 150], [860, 920, 125], [957, 1050, 112], [1065, 1200, 98], [1175, 1350, 80]]} lines={[0.32, 0.62]} />
    <path d="M1130 1373Q1165 1360 1190 1340M1190 1340L1197 1285 1215 1285M1190 1340L1225 1350M1198 1300V1372" className="e" />
    <path d="M600 600L640 540 765 475 805 575Q825 660 835 765L790 785Q770 860 716 862L640 820 560 800 500 690 510 650z" fill="url(#jl)" />
    <path d="M640 545Q700 505 765 478L782 540Q700 580 645 615z" fill="#aeada9" />
    <path d="M765 475Q785 550 805 575L832 768M725 590Q770 660 790 785M640 635Q720 580 805 575M640 635Q670 690 695 750Q750 765 790 785Q765 860 715 862M565 705L640 635M598 752L670 695M565 705L598 752L670 798M695 752L670 798Q660 822 640 822M610 548Q640 570 642 635Q600 630 590 625M500 680Q510 705 565 705M790 785L840 768M560 800Q570 765 598 752" className="e" />

    {/* rear frame, right side */}
    <Right>
      <Strut pts={[[1215, 600, 34], [1240, 750, 36], [1262, 900, 34], [1280, 1020, 30]]} sh="bright" lines={[0.9]} />
      <Strut pts={[[1165, 520, 50], [1195, 700, 44], [1215, 850, 48], [1232, 1050, 56]]} lines={[0.35, 0.75]} />
      <Strut pts={[[1035, 460, 70], [965, 660, 66], [908, 820, 66], [895, 900, 66]]} lines={[0.05, 0.25, 0.9]} />
      <Strut pts={[[775, 610, 60], [800, 700, 55], [845, 810, 40]]} lines={[0.05, 0.9]} />
      <Strut pts={[[735, 640, 85], [775, 730, 78], [835, 850, 88], [890, 925, 95], [1040, 1000, 92], [1170, 1065, 90], [1260, 1080, 90]]} sh="ring" lines={[0.25, 0.45]} />
      <Strut pts={[[865, 310, 80], [800, 430, 84], [750, 530, 100], [738, 620, 100]]} sh="soft" lines={[0.3, 0.55]} />
      <Strut pts={[[530, 730, 160], [460, 830, 130], [390, 950, 120]]} sh="ring" lines={[0.35, 0.72]} />
      <path d="M500 420L655 475 700 500 720 530 780 600 735 690 640 740 560 800 500 725 445 705Q470 620 455 545L430 500 480 518z" fill="url(#jr)" />
      <path d="M510 420L655 478 645 540 500 490z" fill="#8f8e8a" />
      <path d="M510 415Q510 480 480 518Q475 620 458 715L500 722M480 518Q570 520 642 560Q660 560 705 545M655 475Q635 510 642 560L725 622L692 675L620 725M642 560L612 622L692 675M612 622L588 685L500 722Q520 790 570 796M553 525Q510 600 500 722M588 685Q610 700 638 748M725 622L780 602M725 622Q735 540 800 440M692 675Q695 710 705 725M690 490Q685 520 705 548M440 492Q465 500 480 518L448 530" className="e" />
      <path d="M725 622Q790 760 850 820L870 862M850 820L818 890M850 820Q870 800 885 760M870 862H928M870 862Q845 900 855 942M1085 978Q1030 975 1035 1030 1040 1050 1055 1055" className="e" />
    </Right>

    {/* left bracket */}
    <path d="M272 170L455 197 295 362 267 350z" fill="url(#wing)" className="o" />
    <path d="M272 170L455 197 430 215 275 190z" fill="#97968f" className="o" />
    <path d="M350 600Q400 590 412 540L510 450 500 430 400 500z" fill="#85837e" />
    <path d="M108 332L298 372V512L258 528 106 505z" fill="#6f7373" className="o" />
    <path d="M106 505L252 528V588L125 570Q104 560 106 505z" fill="url(#roll)" />
    <path d="M106 505L252 528M125 570Q104 560 106 505M155 575L245 590" className="e" />
    <path d="M298 372Q370 378 403 352V520Q410 530 412 545Q400 600 345 600L300 540z" fill="url(#cyl)" className="o" />
    <path d="M455 195Q520 195 526 220L523 240L403 352Q370 380 292 366z" fill="#97958e" className="o" />
    <path d="M403 352L523 238 520 425 405 532z" fill="#a6a5a1" className="o" />
    <ellipse cx="432" cy="427" rx="13" ry="33" fill="#8b8c8b" className="o" transform="rotate(6 432 427)" />
    <ellipse cx="491" cy="369" rx="12" ry="33" fill="#77797a" className="o" transform="rotate(6 491 369)" />
    <path d="M350 540Q385 530 405 515" className="e" />

    {/* left front strut */}
    <Strut pts={[[300, 520, 86], [280, 610, 88], [225, 790, 88], [155, 990, 84], [130, 1080, 90]]} sh="chrome" lines={[0.02, 0.97]} />
    <path d="M245 540Q250 500 300 500Q350 510 352 560L335 600M256 525Q265 508 300 512Q335 520 342 560M245 592Q290 600 315 632" className="e" />

    {/* right bracket */}
    <Right>
      <path d="M985 430L1160 480 1160 525Q1110 530 1060 490z" fill="#8d8b85" className="o" />
      <path d="M915 100L1045 50Q1068 52 1068 75V185L1000 170z" fill="#8a8c87" className="o" />
      <path d="M915 100L1045 50Q1065 50 1066 72L940 113z" fill="#9d9c96" className="o" />
      <path d="M1172 245L1328 197 1325 370 1215 408 1172 395z" fill="#b5b6b0" className="o" />
      <path d="M1325 370Q1328 428 1300 432L1225 452 1212 408z" fill="url(#roll)" className="o" />
      <path d="M864 130L880 148V300Q890 330 900 345L868 310z" fill="#a9a8a3" className="o" />
      <path d="M900 345L1050 422 1130 420 1150 480Q1120 495 1060 475L925 398Q900 380 900 345z" fill="#b3b3af" className="o" />
      <path d="M1065 245Q1120 262 1174 248V388L1130 430Q1090 425 1065 412z" fill="url(#cyl)" className="o" />
      <path d="M865 128Q862 100 915 99L1172 240Q1160 256 1130 256Q1090 256 1065 245L880 148Q868 140 865 128z" fill="#908e87" className="o" />
      <path d="M880 148L1065 245V412Q1060 425 1048 420L900 345Q880 325 878 300z" fill="#cbcccc" className="o" />
      <ellipse cx="925" cy="270" rx="18" ry="32" fill="#94948f" className="o" transform="rotate(-10 925 270)" />
      <ellipse cx="1019" cy="321" rx="18" ry="32" fill="#94948f" className="o" transform="rotate(-10 1019 321)" />
      <path d="M835 290Q830 340 860 360L885 365M850 320l25-12" className="e" />
      <Strut pts={[[1178, 420, 84], [1240, 570, 78], [1320, 740, 80], [1405, 920, 76]]} sh="steel" lines={[0.02, 0.97]} />
      <path d="M1125 460Q1125 385 1180 377Q1215 380 1213 425M1136 450Q1140 395 1180 388M1165 515Q1200 480 1230 465" className="e" />
    </Right>

    {/* right outer frame */}
    <Right>
      <Low>
        <path d="M1250 95Q1280 100 1330 60L1350 -20 1300 20z" fill="#a3a29e" />
        <Strut pts={[[1400, -175, 70], [1422, -90, 78], [1408, 0, 100], [1368, 130, 84], [1320, 350, 94], [1262, 580, 100], [1190, 810, 88]]} sh="steel" lines={[0.1, 0.35, 0.98]} />
        <path d="M1325 130L1405 143M1420 -62Q1440 -60 1458 -75M1415 45h25" className="e" />
        <Foot x={1048} y={838} r={149} h={182} hx={1080} hr={42} />
        <Strut pts={[[1435, -150, 80], [1350, -80, 118], [1260, 10, 110], [1180, 90, 100], [1080, 190, 98], [1000, 290, 108], [965, 390, 130]]} sh="bright" lines={[0.02]} />
        <path d="M1150 75Q1210 40 1225 125M1380 -160Q1430 -150 1440 -75Q1410 -80 1365 -30Q1400 -20 1420 -62" className="e" />
        <Strut pts={[[955, 540, 100], [985, 680, 92], [1025, 850, 105], [1060, 990, 112]]} sh="soft" lines={[0.02]} />
        <path d="M1000 925Q975 930 990 990Q1010 1050 1070 1070Q1140 1020 1150 955L1112 905L1110 985Q1080 1010 1030 1000Q1005 980 1000 925z" fill="#a3a19b" className="o" />
        <path d="M1000 950Q1030 1050 1085 1038Q1120 1010 1130 960L1150 950" className="e" />
        <path d="M860 385L905 368 925 300 965 262Q1010 265 1025 330L1020 380 1000 545 990 580 910 635 850 610 800 605Q830 560 830 510L820 440z" fill="url(#jg)" />
        <path d="M960 264Q1010 265 1025 330Q1010 420 998 550Q985 610 910 635M895 368Q945 390 938 570L956 606M858 380Q865 400 860 418Q900 418 925 398M860 418Q895 500 872 580L850 612M860 418L820 440Q840 520 803 600L805 630M803 600Q870 580 938 570Q920 610 875 610M938 460L1018 370M940 568L1000 500" className="e" />
        <path d="M1145 785L1185 805Q1210 820 1212 900M1200 830L1238 845" className="e" />
      </Low>
    </Right>

    {/* front frame */}
    <Right>
      <Low>
        <Strut pts={[[195, 262, 74], [150, 345, 62], [70, 530, 62], [-20, 740, 66]]} sh="steel" lines={[0.25, 0.5]} />
        <Strut pts={[[410, 265, 72], [462, 390, 54], [525, 540, 56], [590, 690, 72]]} lines={[0.4, 0.65, 0.98]} />
        <path d="M170 245L445 240Q450 270 430 280L400 290Q300 260 215 290Q170 285 165 265z" fill="#96948e" className="o" />
        <path d="M180 258L440 250M240 250Q260 280 285 288M380 240Q340 260 320 288M315 246l-10 44" className="e" />
        <Strut pts={[[535, 90, 80], [700, 265, 76], [790, 365, 76], [828, 450, 72], [815, 530, 58], [765, 615, 74], [690, 685, 88], [600, 728, 92], [450, 752, 76], [300, 765, 82], [120, 775, 82], [0, 768, 88], [-80, 735, 86], [-180, 650, 80], [-232, 560, 54], [-220, 480, 55]]} lines={[0.45, 0.7]} />
        <path d="M545 95l35-15M790 508h38M755 558Q765 590 803 600M625 645Q635 670 612 690L655 750M560 692h52M560 692L592 775M536 640Q530 680 560 692M290 722Q298 760 295 808M-20 722h60M40 722L0 810M255 720h35" className="e" />
        <path d="M500 722l16-4 8 4M638 670l18-4" stroke="#eee" strokeWidth="8" strokeLinecap="round" fill="none" />
      </Low>
    </Right>
    <Low>
      <Strut pts={[[1460, 100, 100], [1300, 275, 98], [1200, 390, 92], [1120, 480, 92]]} sh="steel" lines={[0.3, 0.55]} />
      <path d="M1372 112Q1400 125 1428 135Q1450 120 1452 90M1428 135L1436 182" className="e" />
    </Low>

    {/* left outer frame */}
    <Low>
      <Strut pts={[[155, -20, 150], [168, 90, 172], [190, 190, 148], [235, 285, 106], [310, 500, 120], [405, 730, 112], [495, 930, 88], [540, 1060, 30]]} lines={[0.02, 0.58]} sh="dark" />
      <path d="M100 -20Q90 60 120 190L182 285 218 275Q182 180 182 80L178 0z" fill="#c3c3c1" />
      <path d="M180 20Q175 180 220 285M98 68Q130 80 182 80M120 190H182M182 285L283 260M80 10Q75 110 115 185L180 285M182 80Q215 110 255 100" className="e" />
      <path d="M255 105Q290 125 300 95M262 135Q290 155 310 125" className="e" />
      <path d="M450 963L490 942 545 895M490 942V1025M490 995Q510 990 520 1003" className="e" />
      <Foot x={678} y={936} r={158} h={178} hx={676} hr={70} />
      <Strut pts={[[105, 30, 120], [170, 12, 112], [260, 52, 128], [400, 130, 108], [560, 205, 88], [760, 295, 92], [880, 355, 112], [950, 430, 130], [970, 540, 110]]} sh="bright" lines={[0.97]} />
      <path d="M98 70L182 78Q175 -10 225 -25M182 78Q210 55 262 85M530 230Q520 160 590 172" className="e" />
      <path d="M100 -35Q130 -50 160 -30M120 -25Q90 -10 98 68" className="e" />
      <Strut pts={[[950, 590, 130], [905, 710, 116], [820, 870, 114], [720, 1050, 116]]} sh="soft" lines={[0.98]} />
      <path d="M680 1000Q640 1020 612 1060Q600 1110 690 1165Q740 1165 785 1055Q760 1110 720 1100Q675 1085 662 1030z" fill="#b0afaa" className="o" />
      <path d="M650 1070Q660 1130 710 1135Q750 1120 780 1075M662 1030L650 1070L615 1058M662 1030Q680 1095 720 1100" className="e" />
      <path d="M878 430Q880 350 935 340L1030 435Q1060 460 1095 470L1148 497Q1135 570 1168 655L1158 690Q1100 665 1050 680L1000 705 895 625V560z" fill="url(#jf)" />
      <path d="M945 346Q900 330 880 430Q900 520 893 625Q950 680 1003 705M880 440Q930 490 1008 528M895 555Q950 600 1003 640L958 682M1045 435Q1005 440 1003 640Q1090 640 1168 658M1022 465Q1050 480 1098 478Q1080 510 1086 640L1100 675M1092 440L1098 478L1148 495Q1125 560 1168 658L1158 690M1003 640Q1020 680 1055 680M1168 658Q1200 640 1208 612M1142 567h34" className="e" />
    </Low>

    {/* front bracket */}
    <Right>
      <path d="M65 945Q70 925 110 918L450 902Q505 905 515 940L543 1008V1180Q540 1275 450 1288L165 1298Q90 1280 65 1150z" fill="#9b9a93" className="o" />
      <path d="M66 945Q75 922 110 918L450 902Q500 905 515 942L85 985z" fill="#96958d" />
      <path d="M85 962L490 940V1120Q480 1180 410 1185L180 1198Q125 1195 122 1180z" fill="#6f7374" className="o" />
      <path d="M82 960L498 938 490 958 105 980z" fill="#a3a19b" className="o" />
      <path d="M66 950L92 1038V1200L68 1150z" fill="#a7a6a0" className="o" />
      <path d="M490 945L512 1020V1185L490 1120z" fill="#a8a29c" className="o" />
      <path d="M122 1180Q140 1197 180 1198L410 1185Q490 1165 490 1112L512 1180Q510 1245 432 1257L200 1270Q125 1265 122 1180z" fill="url(#shelf)" className="o" />
      <path d="M92 1038L122 1040V1180Q125 1268 200 1270L432 1257Q512 1245 512 1180V1022L543 1008V1180Q540 1275 450 1288L165 1298Q95 1270 92 1200z" fill="#74787a" className="o" />
      <path d="M498 938L512 1020 543 1008 515 942z" fill="#9d9b95" className="o" />
      <path d="M85 962L92 1038 122 1040 100 980z" fill="#97958f" className="o" />
      <path d="M175 1198L198 1270M415 1186L438 1257" className="e" />
      <circle cx="218" cy="1062" r="30" fill="#9a918d" className="o" />
      <circle cx="369" cy="1053" r="30" fill="#9a918d" className="o" />
      <path d="M197 1044L240 1042M350 1035L388 1034" className="e" />
      <path d="M212 1058L232 1088M366 1046L384 1078" stroke="#c2bab6" strokeWidth="12" />
    </Right>
  </Model>
);

const ViewCube = () => (
  <ViewCubeSvg width="275" height="240" viewBox="0 0 825 720" role="img" aria-label="View cube">
    <defs>
      <linearGradient id="vt">
        <stop offset="0" stopColor="#9c9c9c" />
        <stop offset="1" stopColor="#adadad" />
      </linearGradient>
    </defs>
    <path d="M175 238L330 155 598 190 508 288z" fill="url(#vt)" />
    <path d="M175 238L508 288 493 603 195 540z" fill="#9b9b9b" />
    <path d="M508 288L598 190 583 462 493 603z" fill="#a6a6a6" />
    <path d="M598 190L508 288 493 603M330 155L598 190L583 462L493 603L195 540" fill="none" stroke="#777" strokeWidth="2.5" strokeDasharray="14 5" />
    <path d="M442 270Q442 258 470 258L524 265V330L505 347H442z" fill="#8b8e90" opacity=".75" />
    <g fontFamily="Liberation Sans, sans-serif" fontWeight="700" fill="#6c7075" textAnchor="middle">
      <text transform="matrix(-0.94 -0.17 0.02 -1.15 342 388)" fontSize="74">BOTTOM</text>
      <text transform="matrix(0.99 0.12 -0.72 0.5 396 228)" fontSize="62">FRONT</text>
      <text transform="matrix(-0.04 1 -0.5 0.55 545 385)" fontSize="58">RIGHT</text>
    </g>
    <path d="M175 236L338 145" stroke="#4a44c4" strokeWidth="6" />
    <path d="M175 238L565 293" stroke="#c24a4a" strokeWidth="6" />
    <path d="M175 238L192 587" stroke="#3fc23f" strokeWidth="6" />
    <g fontFamily="Noto Sans, sans-serif" fontSize="100" fontWeight="600" textAnchor="middle">
      <text x="354" y="160" fontSize="88" fill="#4843c2">Z</text>
      <text x="621" y="334" fill="#c94343">X</text>
      <text x="194" y="662" fill="#43c043">Y</text>
    </g>
  </ViewCubeSvg>
);

/* ------------------------------------------------------------------ */
/* Data                                                                */
/* ------------------------------------------------------------------ */

const tabs = ["SOLID", "SURFACE", "MESH", "SHEET METAL", "PLASTIC", "UTILITIES", "MANAGE"];

const groups: [string, string[]][] = [
  ["CREATE", ["sketch", "revolve", "extrude", "hole", "pattern"]],
  ["AUTOMATE", ["automate"]],
  ["MODIFY", ["remove", "fillet", "shell", "combine", "split"]],
  ["ASSEMBLE", ["component", "joint", "bom"]],
  ["CONFIGURE", ["config", "configTable"]],
  ["CONSTRUCT", ["offsetPlane", "midPlane"]],
  ["INSPECT", ["measure"]],
  ["INSERT", ["derive", "svgIn", "insertMesh", "canvasPic"]],
  ["SELECT", ["select"]],
];

const treeItems = ["Origin", "Bodies", "Sketches", "Construction"];

const features = [
  "solidBody", "solidBody", "form", "plane", "combine", "sketchEdit", "extrude", "fillet",
  "fillet", "removeBody", "extrude", "sketchEdit", "extrude", "removeBody", "removeBody", "extrude",
  "fillet", "removeBody", "fillet", "fillet", "mirror", "circular", "combine", "sketchEdit",
];

const playback: [string, string][] = [
  ["Go to start", "M6 4h5v32H6zM34 4v32L12 20z"],
  ["Step back", "M30 4v32L6 20zM32 14h5v12h-5z"],
  ["Play", "M7 1v38l30-19z"],
  ["Step forward", "M12 4v32l25-16zM4 14h5v12H4z"],
  ["Go to end", "M8 4v32l22-16zM31 4h5v32h-5z"],
];

/* ------------------------------------------------------------------ */

export default function App() {
  return (
    <Page>
      <GlobalStyle />
      <TitleBar>
        <svg width="37" height="42" viewBox="0 0 37 42">
          <path d="M4 1h31v32H0V6z" fill="#ff6b00" />
          <path d="M0 6l4-5v28l-4 4z" fill="#ff9c4d" />
          <path d="M4 29h33v12H4z" fill="#8a3500" />
          <text x="21" y="22" fontFamily="Liberation Sans, sans-serif" fontWeight="700" fontSize="22" fill="#fff" textAnchor="middle">F</text>
          <text x="20" y="39" fontFamily="Liberation Sans, sans-serif" fontWeight="700" fontSize="9" fill="#fff" textAnchor="middle">FUS</text>
        </svg>
        <WindowTitle>ENGINE TRUSS-PLUTO v4 (ICL Rocketry) - Autodesk Fusion (Education License)</WindowTitle>
        <WindowControls>
          <button aria-label="Minimize">
            <svg width="24" height="24" viewBox="0 0 24 24"><path d="M2 12h20" stroke="#000" strokeWidth="2" /></svg>
          </button>
          <button aria-label="Restore">
            <svg width="24" height="24" viewBox="0 0 24 24" fill="none" stroke="#000" strokeWidth="2">
              <rect x="3" y="7" width="14" height="14" rx="3" />
              <path d="M7 3h10q4 0 4 4v10" />
            </svg>
          </button>
          <button aria-label="Close">
            <svg width="24" height="24" viewBox="0 0 24 24"><path d="M2 2l20 20M22 2L2 22" stroke="#000" strokeWidth="2" /></svg>
          </button>
        </WindowControls>
      </TitleBar>

      <AppBar>
        <QuickAccess>
          <QuickButton $w={85} aria-label="Show data panel"><GridGlyph /></QuickButton>
          <QuickButton $w={110} aria-label="File"><FileGlyph /><Caret c="#636363" w={18} h={12} /></QuickButton>
          <QuickButton $w={85} aria-label="Save"><SaveGlyph /></QuickButton>
          <QuickButton $w={97} aria-label="Undo"><UndoGlyph /><Caret c="#8c8c8c" w={18} h={12} /></QuickButton>
          <QuickButton $w={80} aria-label="Redo"><UndoGlyph flip /><Caret c="#8c8c8c" w={18} h={12} /></QuickButton>
        </QuickAccess>
        <DocumentTab>
          <DocumentName>
            <svg width="37" height="40" viewBox="0 0 37 40">
              <path d="M18.500 0L37 10v20L18.500 40 0 30V10z" fill="#ff9a4d" />
              <path d="M18.500 0L37 10 18.500 20 0 10z" fill="#ffc9a3" />
              <path d="M37 10v20L18.500 40V20z" fill="#ff6b00" />
            </svg>
            ENGINE TRUSS-PLUTO v4
          </DocumentName>
          <button aria-label="Close tab">
            <svg width="24" height="24" viewBox="0 0 24 24"><path d="M2 2l20 20M22 2L2 22" stroke="#777" strokeWidth="3" /></svg>
          </button>
        </DocumentTab>
        <AppActions>
          <NewTab aria-label="New tab">
            <svg width="32" height="32" viewBox="0 0 32 32"><path d="M16 0v32M0 16h32" stroke="#808080" strokeWidth="7" /></svg>
          </NewTab>
          <AppAction aria-label="Extensions"><PlugGlyph /></AppAction>
          <AppAction aria-label="Job status"><ClockGlyph /></AppAction>
          <AppAction aria-label="Notifications"><BellGlyph /></AppAction>
          <AppAction aria-label="Help"><HelpGlyph /></AppAction>
          <AppAction aria-label="Account"><AvatarGlyph /></AppAction>
        </AppActions>
      </AppBar>

      <Ribbon>
        <WorkspaceButton>DESIGN <Caret /></WorkspaceButton>
        <RibbonBody>
          <RibbonTabs>
            {tabs.map((t, i) => (
              <RibbonTab key={t} $active={i === 0}>{t}</RibbonTab>
            ))}
          </RibbonTabs>
          <ToolGroups>
            {groups.map(([label, tools]) => (
              <ToolGroup key={label}>
                <ToolRow>
                  {tools.map((t) => (
                    <ToolButton key={t} $active={t === "select"} aria-label={t}><Icon name={t} /></ToolButton>
                  ))}
                </ToolRow>
                <GroupLabel>{label}<Caret /></GroupLabel>
              </ToolGroup>
            ))}
          </ToolGroups>
        </RibbonBody>
      </Ribbon>

      <Canvas>
        <Truss />
        <TopRow>
          <BrowserPane>
            <PaneHeader>
              <PaneIcon aria-label="Collapse">
                <svg width="26" height="26" viewBox="0 0 26 26" fill="#333"><path d="M13 5v16L1 13zM26 5v16L14 13z" /></svg>
              </PaneIcon>
              <PaneTitle>BROWSER</PaneTitle>
              <PaneIcon $end aria-label="Hide">
                <svg width="26" height="26" viewBox="0 0 26 26"><circle cx="13" cy="13" r="12" fill="#2e2e2e" /><path d="M7 13h12" stroke="#ccc" strokeWidth="3" /></svg>
              </PaneIcon>
            </PaneHeader>
            <Tree>
              <TreeRow $root>
                <Twisty $root aria-label="Collapse root"><Twist open /></Twisty>
                <TreeItem>
                  <VisibilityButton $w={62}><Eye /></VisibilityButton>
                  <RootBar>
                    <svg width="34" height="36" viewBox="0 0 34 36">
                      <path d="M2 8l7-6h23v23l-7 8H2z" fill="#c9cfdb" stroke="#444" strokeWidth="2" />
                      <path d="M3 9l7-6h21l-6 6z" fill="#f7f8fa" />
                      <path d="M25 9l6-6v22l-6 7z" fill="#97a0b0" />
                    </svg>
                    ENGINE TRUSS-PLUTO v4
                  </RootBar>
                  <RadioCell><RadioInput type="radio" defaultChecked aria-label="Activate component" /></RadioCell>
                </TreeItem>
              </TreeRow>
              <TreeRow>
                <Twisty aria-label="Expand"><Twist /></Twisty>
                <TreeItem>
                  <Cell $w={52} $line><Gear size={35} c="#808080" hole="#f2f2f2" /></Cell>
                  <ItemName $pad={20}>Document Settings</ItemName>
                </TreeItem>
              </TreeRow>
              <TreeRow>
                <Twisty aria-label="Expand"><Twist /></Twisty>
                <TreeItem>
                  <Cell $w={62} $line><Folder /></Cell>
                  <ItemName $pad={20}>Named Views</ItemName>
                </TreeItem>
              </TreeRow>
              {treeItems.map((t) => (
                <TreeRow key={t}>
                  <Twisty aria-label="Expand"><Twist /></Twisty>
                  <TreeItem>
                    <VisibilityButton $w={62} $line><Eye /></VisibilityButton>
                    <Cell $w={56}><Folder /></Cell>
                    <ItemName $pad={26}>{t}</ItemName>
                  </TreeItem>
                </TreeRow>
              ))}
            </Tree>
          </BrowserPane>
          <ViewCube />
        </TopRow>

        <BottomRow>
          <PaneHeader>
            <PaneTitle $indent>COMMENTS</PaneTitle>
            <PaneIcon $end aria-label="Add comment">
              <svg width="26" height="26" viewBox="0 0 26 26"><circle cx="13" cy="13" r="12" fill="#2e2e2e" /><path d="M7 13h12M13 7v12" stroke="#ddd" strokeWidth="3" /></svg>
            </PaneIcon>
          </PaneHeader>
          <NavBar>
            {nav.map((n) => (
              <NavButton key={n.name} $caret={n.caret} $tight={n.tight} aria-label={n.name}>
                <svg width="40" height="40" viewBox="0 0 40 40">{n.art}</svg>
                {n.caret && <Caret />}
              </NavButton>
            ))}
          </NavBar>
          <HelpBadge aria-label="Assistant">
            <svg width="26" height="20" viewBox="0 0 26 20" stroke="#fff" strokeWidth="2" fill="none">
              <path d="M2 12L17 3M2 17L24 3M15 17L24 11" />
              <path d="M10 17L24 8" stroke="#777" />
              <path d="M21 17h3" />
            </svg>
          </HelpBadge>
        </BottomRow>
      </Canvas>

      <TimelineBar>
        <Playback>
          {playback.map(([label, d]) => (
            <PlayButton key={label} aria-label={label}>
              <svg width="40" height="40" viewBox="0 0 40 40"><path d={d} fill="#636363" /></svg>
            </PlayButton>
          ))}
        </Playback>
        <Track>
          {features.map((f, i) => (
            <Feature key={i}>
              <FeatureButton aria-label={f}><Icon name={f} size={41} /></FeatureButton>
              <Tick $edge={i === 0 ? "first" : i === features.length - 1 ? "last" : undefined} />
            </Feature>
          ))}
        </Track>
        <Marker width="30" height="80" viewBox="0 0 30 80">
          <path d="M0 0h30v12L18 24v56h-5V24L0 12z" fill="#636363" />
        </Marker>
        <SettingsButton aria-label="Timeline settings"><Gear size={39} c="#808080" hole="#f2f2f2" /></SettingsButton>
      </TimelineBar>
    </Page>
  );
}
